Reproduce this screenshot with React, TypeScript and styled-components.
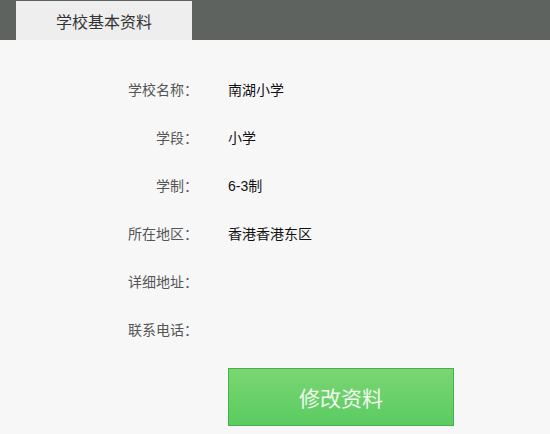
import React from "react"
import styled, { createGlobalStyle } from "styled-components"

const Global = createGlobalStyle`
  html, body {
    margin: 0;
    padding: 0;
    background: #f7f7f7;
    font-family: "Liberation Sans", "Noto Sans CJK SC", sans-serif;
  }
`

const TopBar = styled.div`
  height: 40px;
  background: #5e6360;
  display: flex;
  align-items: flex-end;
  padding-left: 16px;
`

const Tab = styled.div`
  width: 176px;
  height: 39px;
  background: #eeeeee;
  color: #333;
  font-size: 16px;
  display: flex;
  align-items: center;
  justify-content: center;
`

const Content = styled.div`
  padding-top: 25px;
`

const Row = styled.div`
  display: flex;
  align-items: center;
  height: 48px;
  font-size: 14px;
`

const Label = styled.div`
  width: 198px;
  text-align: right;
  color: #555;
`

const Value = styled.div`
  margin-left: 30px;
  color: #111;
`

const Actions = styled.div`
  padding: 15px 0 0 228px;
`

const Button = styled.button`
  width: 226px;
  height: 58px;
  border: 1px solid #48b24a;
  background: linear-gradient(#7bd672, #5acb62);
  color: #f2f8f0;
  font-size: 21px;
  font-family: inherit;
  cursor: pointer;
  padding: 0;
`

type Field = { label: string; value: string }

const fields: Array<Field> = [
  { label: "学校名称：", value: "南湖小学" },
  { label: "学段：", value: "小学" },
  { label: "学制：", value: "6-3制" },
  { label: "所在地区：", value: "香港香港东区" },
  { label: "详细地址：", value: "" },
  { label: "联系电话：", value: "" },
]

export default function App() {
  return (
    <>
      <Global />
      <TopBar>
        <Tab>学校基本资料</Tab>
      </TopBar>
      <Content>
        {fields.map(f => (
          <Row key={f.label}>
            <Label>{f.label}</Label>
            <Value>{f.value}</Value>
          </Row>
        ))}
        <Actions>
          <Button>修改资料</Button>
        </Actions>
      </Content>
    </>
  )
}
